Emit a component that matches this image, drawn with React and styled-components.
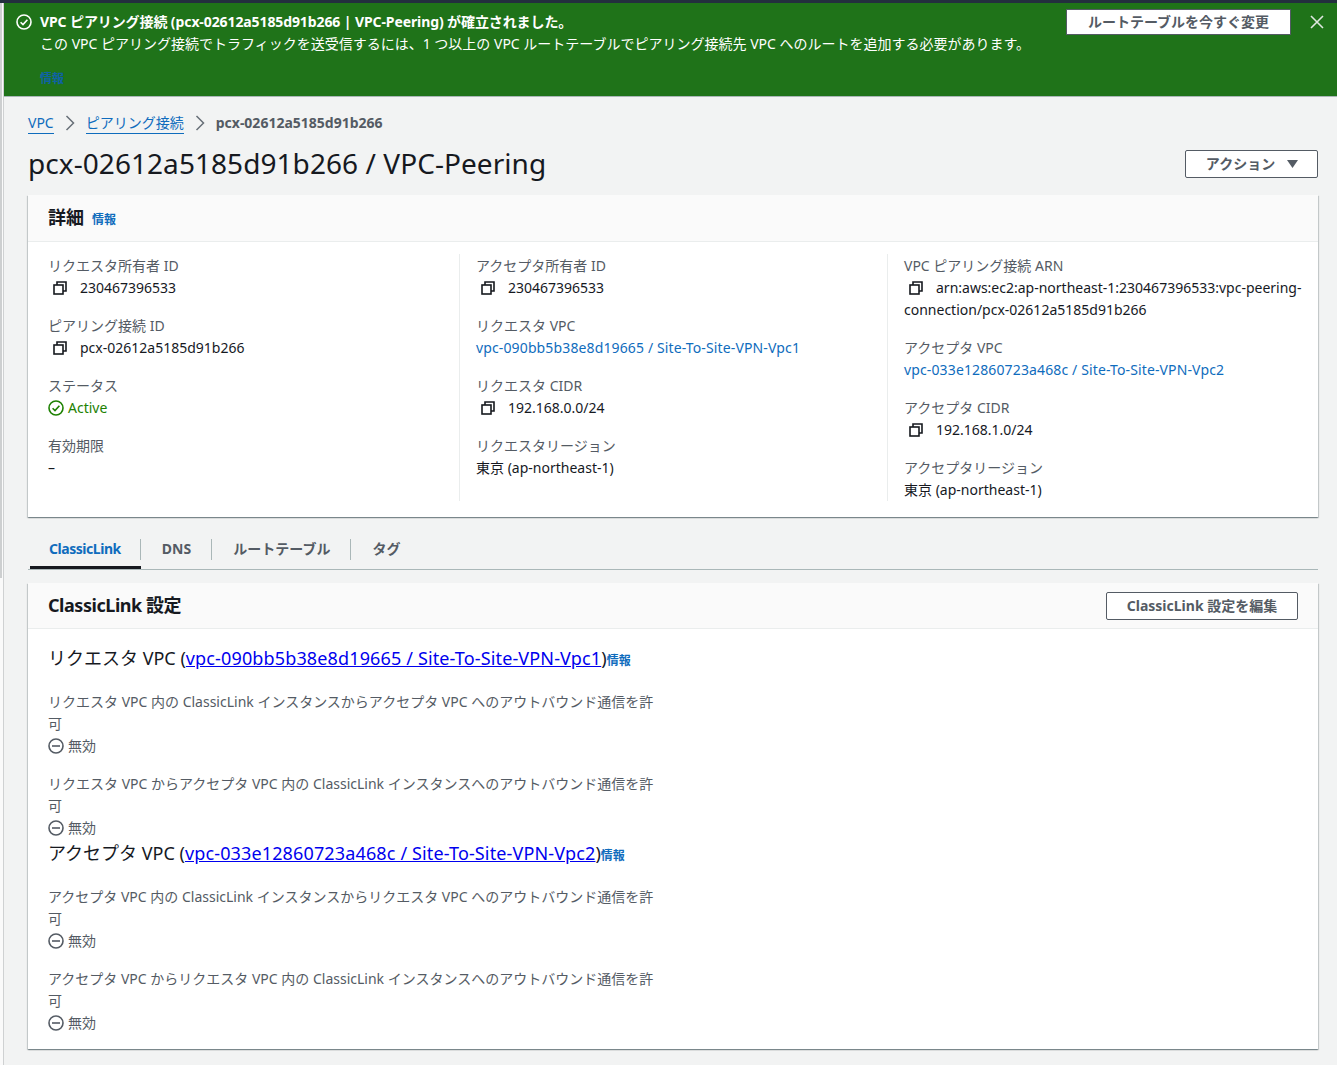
import React from "react";
import styled, { createGlobalStyle } from "styled-components";

const Global = createGlobalStyle`
  html, body { margin: 0; padding: 0; background: #f2f3f3; }
  body { font-family: "Noto Sans", "Noto Sans CJK JP", sans-serif; font-size: 14px; line-height: 22px; color: #16191f; }
`;

const Page = styled.div`
  height: 1065px;
  overflow: hidden;
  background: #f2f3f3;
`;
const TopBar = styled.div`
  height: 3px;
  background: #232f3e;
`;
const Shell = styled.div`
  display: flex;
  height: 1062px;
`;
const Rail = styled.div`
  width: 4px;
  flex: none;
  background: #fafafa;
  border-right: 1px solid #cfd1d2;
  box-sizing: border-box;
`;
const RailThumb = styled.div`
  width: 2px;
  height: 575px;
  background: #cdcfd0;
`;
const Main = styled.div`
  flex: 1;
  min-width: 0;
`;
const Banner = styled.div`
  height: 94px;
  box-sizing: border-box;
  background: #1f7319;
  border-bottom: 1px solid #aab7b8;
  padding: 8px 12px 0 12px;
  display: flex;
  color: #fff;
`;
const BannerIcon = styled.div`
  width: 24px;
  flex: none;
  padding-top: 3px;
  height: 16px;
  svg { display: block; }
`;
const BannerText = styled.div`
  flex: 1;
  min-width: 0;
`;
const BannerTitle = styled.div`
  font-weight: 700;
  white-space: nowrap;
  letter-spacing: -0.1px;
`;
const BannerBody = styled.div`
  white-space: nowrap;
`;
const BannerInfo = styled.div`
  margin-top: 13px;
  font-size: 12px;
  font-weight: 700;
  color: #0f62a4;
`;
const BannerAction = styled.button`
  width: 225px;
  height: 26px;
  margin: -2px 18px 0 0;
  background: #fff;
  border: 1px solid #545b64;
  border-radius: 0;
  font: 700 14px/22px "Noto Sans", "Noto Sans CJK JP", sans-serif;
  color: #545b64;
  padding: 0;
  flex: none;
`;
const CloseBtn = styled.div`
  width: 16px;
  height: 16px;
  flex: none;
  margin-top: 3px;
  svg { display: block; }
`;
const Content = styled.div`
  padding: 15px 19px 0 24px;
`;
const Crumbs = styled.nav`
  display: flex;
  align-items: center;
  height: 22px;
  white-space: nowrap;
`;
const CrumbLink = styled.a`
  color: #0f6cbd;
  border-bottom: 1px solid #0f6cbd;
  line-height: 20px;
`;
const CrumbSep = styled.span`
  width: 32px;
  display: flex;
  justify-content: center;
  color: #687078;
  svg { display: block; }
`;
const CrumbCurrent = styled.span`
  color: #545b64;
  font-weight: 700;
`;
const TitleRow = styled.div`
  display: flex;
  justify-content: space-between;
  align-items: center;
  margin-top: 8px;
  height: 44px;
`;
const Title = styled.h1`
  margin: 0 0 2px;
  font-size: 28px;
  line-height: 36px;
  font-weight: 400;
  white-space: nowrap;
  letter-spacing: 0.06px;
`;
const ActionButton = styled.button`
  width: 133px;
  height: 28px;
  background: #fff;
  border: 1px solid #545b64;
  border-radius: 2px;
  font: 700 14px/22px "Noto Sans", "Noto Sans CJK JP", sans-serif;
  color: #545b64;
  padding: 0 0 0 1px;
  display: flex;
  align-items: center;
  justify-content: center;
  gap: 12px;
  svg { display: block; }
`;
const Card = styled.section`
  background: #fff;
  box-shadow: 0 1px 1px 0 rgba(0, 28, 36, 0.3), 1px 1px 1px 0 rgba(0, 28, 36, 0.15), -1px 1px 1px 0 rgba(0, 28, 36, 0.15);
  margin-top: ${(p) => p.$top || 0}px;
`;
const CardHead = styled.header`
  height: ${(p) => p.$h}px;
  box-sizing: border-box;
  background: #fafafa;
  border-bottom: 1px solid #eaeded;
  padding: 0 20px;
  display: flex;
  align-items: center;
  justify-content: space-between;
`;
const HeadLeft = styled.div`
  display: flex;
  align-items: center;
  gap: 8px;
`;
const CardTitle = styled.h2`
  margin: -2px 0 0;
  font-size: 18px;
  line-height: 22px;
  font-weight: 700;
  letter-spacing: ${(p) => p.$ls || 0}px;
`;
const InfoLink = styled.a`
  margin-top: 3px;
  font-size: 12px;
  font-weight: 700;
  color: #0f6cbd;
`;
const Columns = styled.div`
  display: grid;
  grid-template-columns: repeat(3, 428px);
  padding: 12px 3px 16px;
`;
const Column = styled.div`
  padding: 1px 10px 0 ${(p) => (p.$first ? 17 : 16)}px;
  border-left: ${(p) => (p.$first ? "none" : "1px solid #eaeded")};
  display: flex;
  flex-direction: column;
  gap: 16px;
  box-sizing: border-box;
`;
const Field = styled.div``;
const Label = styled.div`
  color: #545b64;
`;
const Value = styled.div`
  color: #16191f;
`;
const CopyWrap = styled.span`
  display: inline-flex;
  align-items: center;
  width: 27px;
  height: 22px;
  padding-left: 5px;
  vertical-align: top;
  svg { display: block; }
`;
const Link = styled.a`
  color: #0f6cbd;
  letter-spacing: 0.13px;
`;
const Active = styled.div`
  display: flex;
  align-items: center;
  gap: 4px;
  color: #1d8102;
  svg { display: block; }
`;
const TabBar = styled.div`
  margin-top: 22px;
  height: 31px;
  box-sizing: border-box;
  border-bottom: 1px solid #aab7b8;
  display: flex;
  align-items: flex-start;
`;
const Tab = styled.div`
  height: 30px;
  box-sizing: border-box;
  display: flex;
  align-items: center;
  padding: 0 ${(p) => p.$pr}px 10px ${(p) => p.$pl}px;
  font-weight: 700;
  color: ${(p) => (p.$active ? "#0f6cbd" : "#545b64")};
  position: relative;
  margin-left: ${(p) => p.$ml || 0}px;
  box-shadow: ${(p) => (p.$active ? "inset 0 -3px 0 #16191f" : "none")};
  white-space: nowrap;
  letter-spacing: ${(p) => p.$ls || 0}px;
  &::after {
    content: ${(p) => (p.$sep ? '""' : "none")};
    position: absolute;
    right: 0;
    top: 0;
    height: 21px;
    width: 1px;
    background: #aab7b8;
  }
`;
const ClassicBody = styled.div`
  padding: 18px 20px 15px;
`;
const VpcHeading = styled.h3`
  margin: ${(p) => p.$top || 0}px 0 0;
  font-size: 18px;
  line-height: 22px;
  font-weight: 400;
  white-space: nowrap;
`;
const HeadingLink = styled.a`
  color: #0000ee;
  text-decoration: underline;
  letter-spacing: 0.14px;
`;
const SmallInfo = styled.a`
  font-size: 12px;
  font-weight: 700;
  color: #0f6cbd;
`;
const Setting = styled.div`
  width: 606px;
  margin-top: ${(p) => p.$top}px;
`;
const SettingLabel = styled.div`
  color: #545b64;
`;
const Disabled = styled.div`
  display: flex;
  align-items: center;
  gap: 4px;
  color: #545b64;
  svg { display: block; }
`;
const EditButton = styled.button`
  width: 192px;
  height: 28px;
  background: #fff;
  border: 1px solid #545b64;
  border-radius: 2px;
  font: 700 14px/22px "Noto Sans", "Noto Sans CJK JP", sans-serif;
  color: #545b64;
  padding: 0;
`;

const CopyIcon = () => (
  <svg width="14" height="14" viewBox="0 0 14 14" fill="none" stroke="#16191f" strokeWidth="1.6">
    <rect x="1" y="4" width="9" height="9" />
    <path d="M4 4V1h9v9h-3" />
  </svg>
);
const CheckCircle = ({ color, size = 16, w = 1.6 }) => (
  <svg width={size} height={size} viewBox="0 0 16 16" fill="none" stroke={color} strokeWidth={w}>
    <circle cx="8" cy="8" r="7" />
    <path d="M4.6 8.2l2.4 2.4 4.4-4.8" />
  </svg>
);
const MinusCircle = () => (
  <svg width="16" height="16" viewBox="0 0 16 16" fill="none" stroke="#545b64" strokeWidth="1.6">
    <circle cx="8" cy="8" r="7" />
    <path d="M4 8h8" />
  </svg>
);
const Chevron = () => (
  <svg width="10" height="16" viewBox="0 0 10 16" fill="none" stroke="currentColor" strokeWidth="1.5">
    <path d="M1.5 1l7 7-7 7" />
  </svg>
);

const Copyable = ({ children }) => (
  <Value>
    <CopyWrap>
      <CopyIcon />
    </CopyWrap>
    {children}
  </Value>
);

const SettingBlock = ({ top, label }) => (
  <Setting $top={top}>
    <SettingLabel>{label}</SettingLabel>
    <Disabled>
      <MinusCircle />
      無効
    </Disabled>
  </Setting>
);

export default function App() {
  return (
    <Page>
      <Global />
      <TopBar />
      <Shell>
        <Rail>
          <RailThumb />
        </Rail>
        <Main>
          <Banner>
            <BannerIcon>
              <CheckCircle color="#fff" />
            </BannerIcon>
            <BannerText>
              <BannerTitle>VPC ピアリング接続 (pcx-02612a5185d91b266 | VPC-Peering) が確立されました。</BannerTitle>
              <BannerBody>
                この VPC ピアリング接続でトラフィックを送受信するには、1 つ以上の VPC ルートテーブルでピアリング接続先 VPC へのルートを追加する必要があります。
              </BannerBody>
              <BannerInfo>情報</BannerInfo>
            </BannerText>
            <BannerAction>ルートテーブルを今すぐ変更</BannerAction>
            <CloseBtn>
              <svg width="16" height="16" viewBox="0 0 16 16" fill="none" stroke="#dfe7e0" strokeWidth="1.6">
                <path d="M2 2l12 12M14 2L2 14" />
              </svg>
            </CloseBtn>
          </Banner>
          <Content>
            <Crumbs>
              <CrumbLink>VPC</CrumbLink>
              <CrumbSep>
                <Chevron />
              </CrumbSep>
              <CrumbLink>ピアリング接続</CrumbLink>
              <CrumbSep>
                <Chevron />
              </CrumbSep>
              <CrumbCurrent>pcx-02612a5185d91b266</CrumbCurrent>
            </Crumbs>
            <TitleRow>
              <Title>pcx-02612a5185d91b266 / VPC-Peering</Title>
              <ActionButton>
                アクション
                <svg width="11" height="8" viewBox="0 0 11 8">
                  <path d="M0 0h11L5.500 8z" fill="#545b64" />
                </svg>
              </ActionButton>
            </TitleRow>
            <Card $top={9}>
              <CardHead $h={47}>
                <HeadLeft>
                  <CardTitle>詳細</CardTitle>
                  <InfoLink>情報</InfoLink>
                </HeadLeft>
              </CardHead>
              <Columns>
                <Column $first>
                  <Field>
                    <Label>リクエスタ所有者 ID</Label>
                    <Copyable>230467396533</Copyable>
                  </Field>
                  <Field>
                    <Label>ピアリング接続 ID</Label>
                    <Copyable>pcx-02612a5185d91b266</Copyable>
                  </Field>
                  <Field>
                    <Label>ステータス</Label>
                    <Active>
                      <CheckCircle color="#1d8102" />
                      Active
                    </Active>
                  </Field>
                  <Field>
                    <Label>有効期限</Label>
                    <Value>–</Value>
                  </Field>
                </Column>
                <Column>
                  <Field>
                    <Label>アクセプタ所有者 ID</Label>
                    <Copyable>230467396533</Copyable>
                  </Field>
                  <Field>
                    <Label>リクエスタ VPC</Label>
                    <Value>
                      <Link>vpc-090bb5b38e8d19665 / Site-To-Site-VPN-Vpc1</Link>
                    </Value>
                  </Field>
                  <Field>
                    <Label>リクエスタ CIDR</Label>
                    <Copyable>192.168.0.0/24</Copyable>
                  </Field>
                  <Field>
                    <Label>リクエスタリージョン</Label>
                    <Value>東京 (ap-northeast-1)</Value>
                  </Field>
                </Column>
                <Column>
                  <Field>
                    <Label>VPC ピアリング接続 ARN</Label>
                    <Copyable>arn:aws:ec2:ap-northeast-1:230467396533:vpc-peering-connection/pcx-02612a5185d91b266</Copyable>
                  </Field>
                  <Field>
                    <Label>アクセプタ VPC</Label>
                    <Value>
                      <Link>vpc-033e12860723a468c / Site-To-Site-VPN-Vpc2</Link>
                    </Value>
                  </Field>
                  <Field>
                    <Label>アクセプタ CIDR</Label>
                    <Copyable>192.168.1.0/24</Copyable>
                  </Field>
                  <Field>
                    <Label>アクセプタリージョン</Label>
                    <Value>東京 (ap-northeast-1)</Value>
                  </Field>
                </Column>
              </Columns>
            </Card>
            <TabBar>
              <Tab $active $sep $ml={2} $pl={19} $pr={20} $ls={-0.45}>ClassicLink</Tab>
              <Tab $sep $pl={21} $pr={21}>DNS</Tab>
              <Tab $sep $pl={21} $pr={21}>ルートテーブル</Tab>
              <Tab $pl={21} $pr={20}>タグ</Tab>
            </TabBar>
            <Card $top={13}>
              <CardHead $h={46}>
                <CardTitle $ls={-0.45}>ClassicLink 設定</CardTitle>
                <EditButton>ClassicLink 設定を編集</EditButton>
              </CardHead>
              <ClassicBody>
                <VpcHeading>
                  リクエスタ VPC (<HeadingLink>vpc-090bb5b38e8d19665 / Site-To-Site-VPN-Vpc1</HeadingLink>)<SmallInfo>情報</SmallInfo>
                </VpcHeading>
                <SettingBlock top={19} label="リクエスタ VPC 内の ClassicLink インスタンスからアクセプタ VPC へのアウトバウンド通信を許可" />
                <SettingBlock top={16} label="リクエスタ VPC からアクセプタ VPC 内の ClassicLink インスタンスへのアウトバウンド通信を許可" />
                <VpcHeading $top={3}>
                  アクセプタ VPC (<HeadingLink>vpc-033e12860723a468c / Site-To-Site-VPN-Vpc2</HeadingLink>)<SmallInfo>情報</SmallInfo>
                </VpcHeading>
                <SettingBlock top={19} label="アクセプタ VPC 内の ClassicLink インスタンスからリクエスタ VPC へのアウトバウンド通信を許可" />
                <SettingBlock top={16} label="アクセプタ VPC からリクエスタ VPC 内の ClassicLink インスタンスへのアウトバウンド通信を許可" />
              </ClassicBody>
            </Card>
          </Content>
        </Main>
      </Shell>
    </Page>
  );
}
